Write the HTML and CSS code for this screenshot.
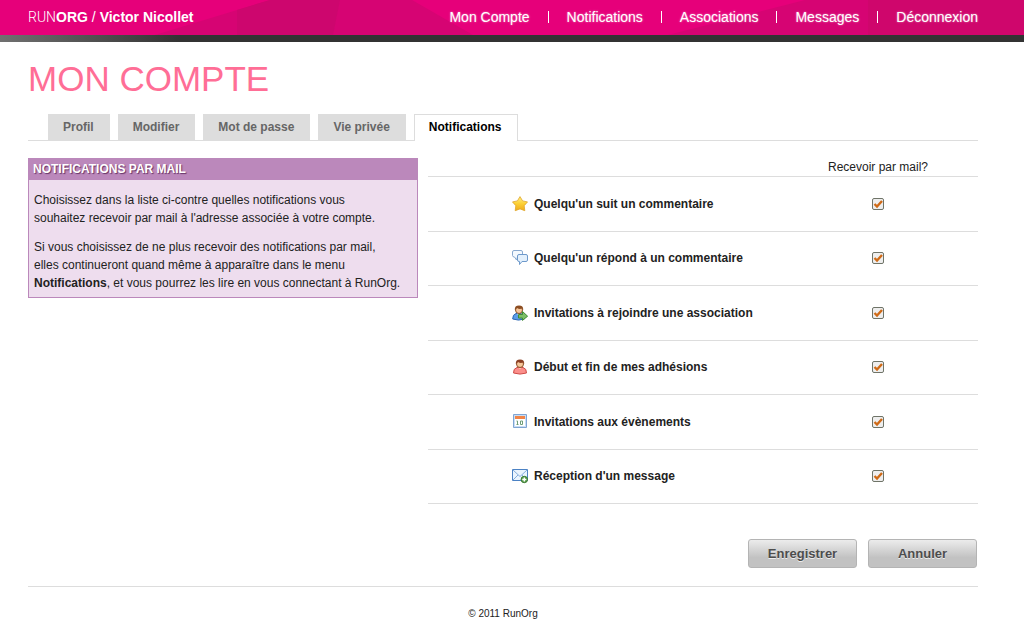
FILE: index.html
```html
<!DOCTYPE html>
<html lang="fr">
<head>
<meta charset="utf-8">
<title>RunOrg - Mon Compte</title>
<link rel="stylesheet" href="styles.css">
</head>
<body>
<header class="topbar">
  <svg class="topbar-art" viewBox="0 0 1024 35" preserveAspectRatio="none" aria-hidden="true">
    <path d="M155 35L270 0H412L473 35Z" fill="#d60473"/>
    <path d="M237 10L270 0H340L333 35H237Z" fill="#cd066e"/>
    <path d="M668 35L805 0H1024V35Z" fill="#d60473"/>
    <path d="M868 0H1024V35H868Z" fill="#cf066c"/>
  </svg>
  <a class="brand" href="#"><span class="brand-thin">RUN</span><b>ORG</b> / <b>Victor Nicollet</b></a>
  <nav class="menu">
    <a href="#">Mon Compte</a>
    <a href="#">Notifications</a>
    <a href="#">Associations</a>
    <a href="#">Messages</a>
    <a href="#">Déconnexion</a>
  </nav>
</header>
<div class="page">
  <h1 class="title">MON COMPTE</h1>
  <nav class="tabs">
    <a class="tab" href="#">Profil</a>
    <a class="tab" href="#">Modifier</a>
    <a class="tab" href="#">Mot de passe</a>
    <a class="tab" href="#">Vie privée</a>
    <a class="tab tab-active" href="#" aria-current="page">Notifications</a>
  </nav>
  <main class="columns">
    <aside class="help">
      <h2 class="help-title">NOTIFICATIONS PAR MAIL</h2>
      <div class="help-body">
        <p>Choisissez dans la liste ci-contre quelles notifications vous<br>souhaitez recevoir par mail à l'adresse associée à votre compte.</p>
        <p>Si vous choisissez de ne plus recevoir des notifications par mail,<br>elles continueront quand même à apparaître dans le menu<br><b>Notifications</b>, et vous pourrez les lire en vous connectant à RunOrg.</p>
      </div>
    </aside>
    <form class="settings">
      <table class="options">
        <thead>
          <tr><td></td><th class="check-col" scope="col">Recevoir par mail?</th></tr>
        </thead>
        <tbody>
          <tr>
            <td><label class="option" for="n1">
              <svg class="icon" viewBox="0 0 16 16"><defs><linearGradient id="gold" x2="0" y2="1"><stop offset="0" stop-color="#fff08a"/><stop offset=".5" stop-color="#fcd035"/><stop offset="1" stop-color="#efaa1c"/></linearGradient></defs><path d="M8 .6L10.600 4.900 15.500 5.900 12.200 9.700 12.800 14.700 8 12.900 3.200 14.700 3.800 9.700.5 5.900 5.400 4.900Z" fill="url(#gold)" stroke="#dfa62a" stroke-width=".8" stroke-linejoin="round"/></svg>
              Quelqu'un suit un commentaire</label></td>
            <td class="check-col"><input class="check" type="checkbox" id="n1" checked></td>
          </tr>
          <tr>
            <td><label class="option" for="n2">
              <svg class="icon" viewBox="0 0 16 16"><path d="M2 .5H9Q10.500.5 10.500 2V5.500Q10.500 7 9 7H5.500L4.500 10 2.500 7Q.5 7 .5 5.500V2Q.5.5 2 .5Z" fill="#f4f9fe" stroke="#89a9cf"/><path d="M7 4.500H14Q15.500 4.500 15.500 6V10Q15.500 11.500 14 11.500H10L7.500 14.500V11.500H7Q5.500 11.500 5.500 10V6Q5.500 4.500 7 4.500Z" fill="#e3f0fc" stroke="#6d99cb"/></svg>
              Quelqu'un répond à un commentaire</label></td>
            <td class="check-col"><input class="check" type="checkbox" id="n2" checked></td>
          </tr>
          <tr>
            <td><label class="option" for="n3">
              <svg class="icon" viewBox="0 0 16 16"><path d="M.7 14Q.6 9.500 4 8.500H9Q12.500 9.500 12.300 14 6.500 16.200.7 14Z" fill="#5c9de8" stroke="#2a66b2"/><path d="M5 8.500L6.500 10.500 8.200 8.500Z" fill="#fff"/><circle cx="7" cy="5" r="3.500" fill="#f7c79b" stroke="#8a4f24"/><path d="M2.800 5Q2.500.6 7 .6T11.200 5L10 3.500Q7.500 4.500 5 3Z" fill="#8c4d21"/><path d="M6.500 9.500H10.500V6.500L15.600 11.200 10.500 15.400V13H6.500Z" fill="#7cbf68" stroke="#3f8a35"/></svg>
              Invitations à rejoindre une association</label></td>
            <td class="check-col"><input class="check" type="checkbox" id="n3" checked></td>
          </tr>
          <tr>
            <td><label class="option" for="n4">
              <svg class="icon" viewBox="0 0 16 16"><path d="M1.500 14Q1.300 9.500 5 8.500H11Q14.700 9.500 14.500 14 8 16.200 1.500 14Z" fill="#fb8f8b" stroke="#cf4c48"/><path d="M6.500 8.500L8 10.300 9.500 8.500Z" fill="#ffd9c4"/><circle cx="8" cy="5" r="3.500" fill="#f7c79b" stroke="#8a4f24"/><path d="M3.800 5Q3.500.6 8 .6T12.200 5L11 3.500Q8.500 4.500 6 3Z" fill="#8c4024"/></svg>
              Début et fin de mes adhésions</label></td>
            <td class="check-col"><input class="check" type="checkbox" id="n4" checked></td>
          </tr>
          <tr>
            <td><label class="option" for="n5">
              <svg class="icon" viewBox="0 0 16 16"><path d="M1.500.5H14.500V13.500H1.500Z" fill="#c9def5" stroke="#7fa5d3"/><path d="M3 2H13V12H3Z" fill="#fff"/><path d="M3 2H13V5H3Z" fill="#f08548"/><path d="M4.500 7H5.500V10.500M4.500 10.500H6.500M8.500 7H10.500V10.500H8.500Z" fill="none" stroke="#6f9e78"/></svg>
              Invitations aux évènements</label></td>
            <td class="check-col"><input class="check" type="checkbox" id="n5" checked></td>
          </tr>
          <tr>
            <td><label class="option" for="n6">
              <svg class="icon" viewBox="0 0 16 16"><path d="M.5 1.500H15.500V12.500H.5Z" fill="#eaf4fe" stroke="#4c82c4"/><path d="M1 2L8 8.500 15 2M1 12L6 7M15 12L10 7" fill="none" stroke="#86aedb"/><circle cx="12.300" cy="11.500" r="3.200" fill="#5b9f4c" stroke="#3b7a34"/><path d="M12.300 9.500V13.500M10.300 11.500H14.300" stroke="#fff" stroke-width="1.400"/></svg>
              Réception d'un message</label></td>
            <td class="check-col"><input class="check" type="checkbox" id="n6" checked></td>
          </tr>
        </tbody>
      </table>
      <div class="actions">
        <button class="button" type="submit">Enregistrer</button>
        <button class="button" type="button">Annuler</button>
      </div>
    </form>
  </main>
  <footer class="footer">© 2011 RunOrg</footer>
</div>
</body>
</html>
```
FILE: styles.css
```css
* {
  box-sizing: border-box;
}

body {
  margin: 0;
  background: #fff;
  color: #222;
  font: 12px/18px "Liberation Sans", Arial, sans-serif;
}

a {
  color: inherit;
  text-decoration: none;
}

.topbar {
  position: relative;
  display: flex;
  justify-content: space-between;
  padding: 8px 46px 9px 28px;
  background: #e6007a;
  color: #fff;
  font-size: 14px;
  margin-bottom: 7px;
}

.topbar::after {
  content: "";
  position: absolute;
  top: 100%;
  left: 0;
  width: 100%;
  height: 7px;
  background: linear-gradient(to right, #707070, #333 180px);
}

.topbar-art {
  position: absolute;
  inset: 0;
  width: 100%;
  height: 100%;
}

.brand,
.menu {
  position: relative;
}

.brand-thin {
  font-family: Roboto, "Liberation Sans", sans-serif;
  font-weight: 300;
}

.menu {
  display: flex;
  align-items: center;
  text-shadow: 0 0 2px rgba(255, 255, 255, 0.6);
}

.menu a + a {
  margin-left: 18px;
  padding-left: 19px;
  background: linear-gradient(#fff, #fff) left 3px / 1px 12px no-repeat;
}

.page {
  padding: 0 46px 0 28px;
}

.title {
  margin: 0;
  padding: 16px 0 15px;
  color: #ff6e96;
  font-size: 35px;
  font-weight: 400;
  line-height: 41px;
}

.tabs {
  display: flex;
  gap: 8px;
  padding-left: 20px;
  border-bottom: 1px solid #ddd;
}

.tab {
  padding: 4px 16px 4px 15px;
  background: #ddd;
  color: #666;
  font-weight: 700;
}

.tab-active {
  margin-bottom: -1px;
  padding: 3px 15px 5px 14px;
  border: 1px solid #ddd;
  border-bottom: 0;
  background: #fff;
  color: #000;
}

.columns {
  display: grid;
  grid-template-columns: 39fr 55fr;
  gap: 10px;
  align-items: start;
  padding: 17px 0 18px;
}

.help {
  border: 1px solid #b8b;
  background: #ede;
}

.help-title {
  margin: 0;
  padding: 1px 4px 2px;
  background: #b8b;
  color: #fff;
  font-size: 12px;
  line-height: 18px;
  text-shadow: 1px 1px 1px #636;
}

.help-body {
  padding: 11px 5px 5px;
}

.help-body p {
  margin: 0;
}

.help-body p + p {
  margin-top: 11px;
}

.options {
  width: 100%;
  height: 346px;
  border-collapse: collapse;
}

.options td,
.options th {
  padding: 0;
  border-bottom: 1px solid #ddd;
  font-weight: 400;
}

.options thead tr {
  height: 18px;
}

.options .check-col {
  width: 200px;
  text-align: center;
}

.option {
  display: flex;
  align-items: center;
  gap: 6px;
  padding-left: 84px;
  font-weight: 700;
}

.icon {
  width: 16px;
  height: 16px;
}

.check {
  appearance: none;
  display: block;
  width: 12px;
  height: 12px;
  margin: 0 auto;
  border: 1px solid #6f7468;
  border-radius: 2px;
  background: #eee;
}

.check:checked {
  background: #eee url("data:image/svg+xml,%3Csvg xmlns='http://www.w3.org/2000/svg' viewBox='0 0 10 10'%3E%3Cpath d='M1.500 5L4 7.500 9 2' fill='none' stroke='%23cf6a17' stroke-width='2.400'/%3E%3C/svg%3E") center / 10px no-repeat;
}

.actions {
  display: flex;
  justify-content: flex-end;
  gap: 11px;
  padding: 35px 1px 0 0;
}

.button {
  min-width: 109px;
  height: 29px;
  border: 1px solid #b4b4b4;
  border-radius: 3px;
  background: linear-gradient(#ececec, #c2c2c2 65%, #c2c2c2);
  color: #4d4d4d;
  font: 700 13px/18px "Liberation Sans", Arial, sans-serif;
  text-shadow: 0 1px #eee;
}

.footer {
  padding: 18px 0;
  border-top: 1px solid #ddd;
  font-size: 10px;
  text-align: center;
}
```
